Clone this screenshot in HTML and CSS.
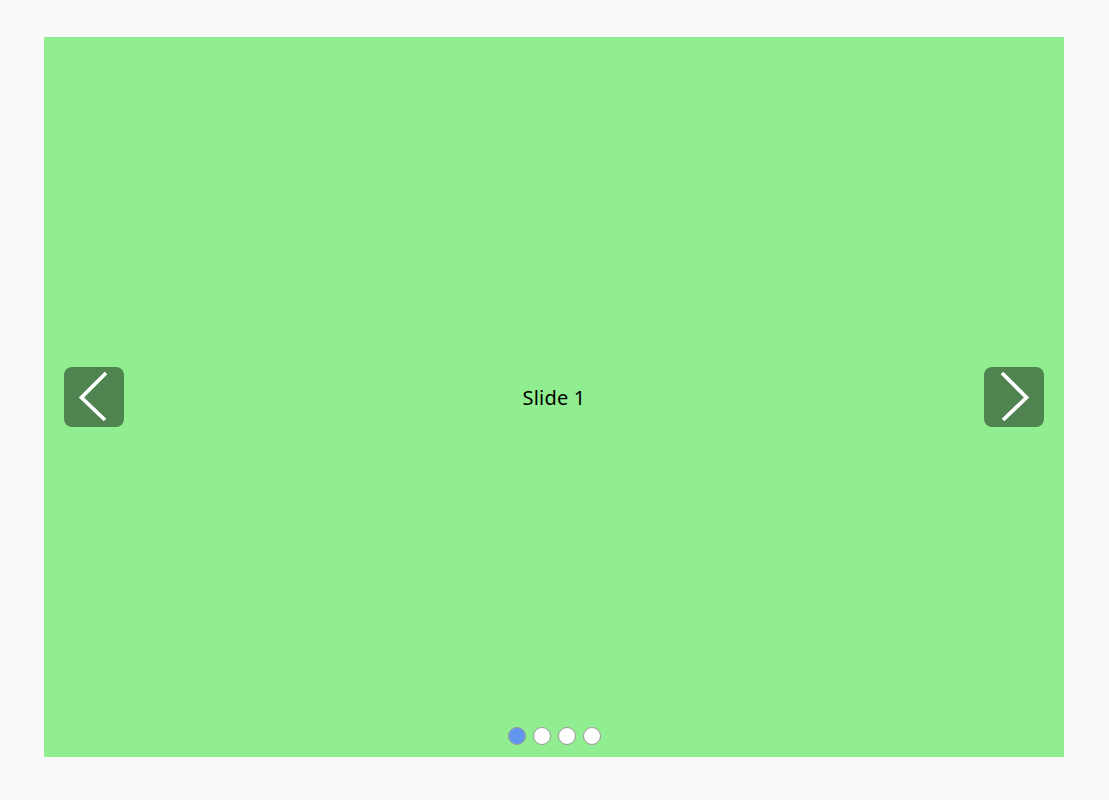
FILE: index.html
```html
<!DOCTYPE html>
<html>
<head>
<meta charset="utf-8">
<link rel="stylesheet" href="styles.css">
</head>
<body>
<div class="carousel">
  <div class="slide">Slide 1</div>
  <button class="nav prev" aria-label="Previous">
    <svg width="60" height="60" viewBox="0 0 60 60"><polyline points="42,6 17.5,30.5 41,53" fill="none" stroke="#fff" stroke-width="3.8"/></svg>
  </button>
  <button class="nav next" aria-label="Next">
    <svg width="60" height="60" viewBox="0 0 60 60"><polyline points="18,6 42.5,30.5 19,53" fill="none" stroke="#fff" stroke-width="3.8"/></svg>
  </button>
  <div class="dots">
    <span class="dot active"></span>
    <span class="dot"></span>
    <span class="dot"></span>
    <span class="dot"></span>
  </div>
</div>
</body>
</html>
```
FILE: styles.css
```css
html, body {
  margin: 0;
  padding: 0;
  background: #f9f9f9;
}
body {
  padding: 37px 45px 43px 44px;
  font-family: "Noto Sans", "Open Sans", sans-serif;
}
.carousel {
  position: relative;
  width: 1020px;
  height: 720px;
  background: #90ee90;
}
.slide {
  height: 100%;
  display: flex;
  align-items: center;
  justify-content: center;
  font-size: 20px;
  letter-spacing: 0.2px;
  color: #000;
}
.nav {
  position: absolute;
  top: 330px;
  width: 60px;
  height: 60px;
  padding: 0;
  border: none;
  border-radius: 8px;
  background: rgba(0, 0, 0, 0.45);
  display: flex;
  align-items: center;
  justify-content: center;
  cursor: pointer;
}
.nav svg { display: block; }
.prev { left: 20px; }
.next { right: 20px; }
.dots {
  position: absolute;
  left: 0;
  right: 0;
  bottom: 12px;
  display: flex;
  justify-content: center;
  gap: 7px;
}
.dot {
  width: 16px;
  height: 16px;
  border-radius: 50%;
  background: #fff;
  border: 1px solid #999;
}
.dot.active {
  background: #6495ed;
}
```
